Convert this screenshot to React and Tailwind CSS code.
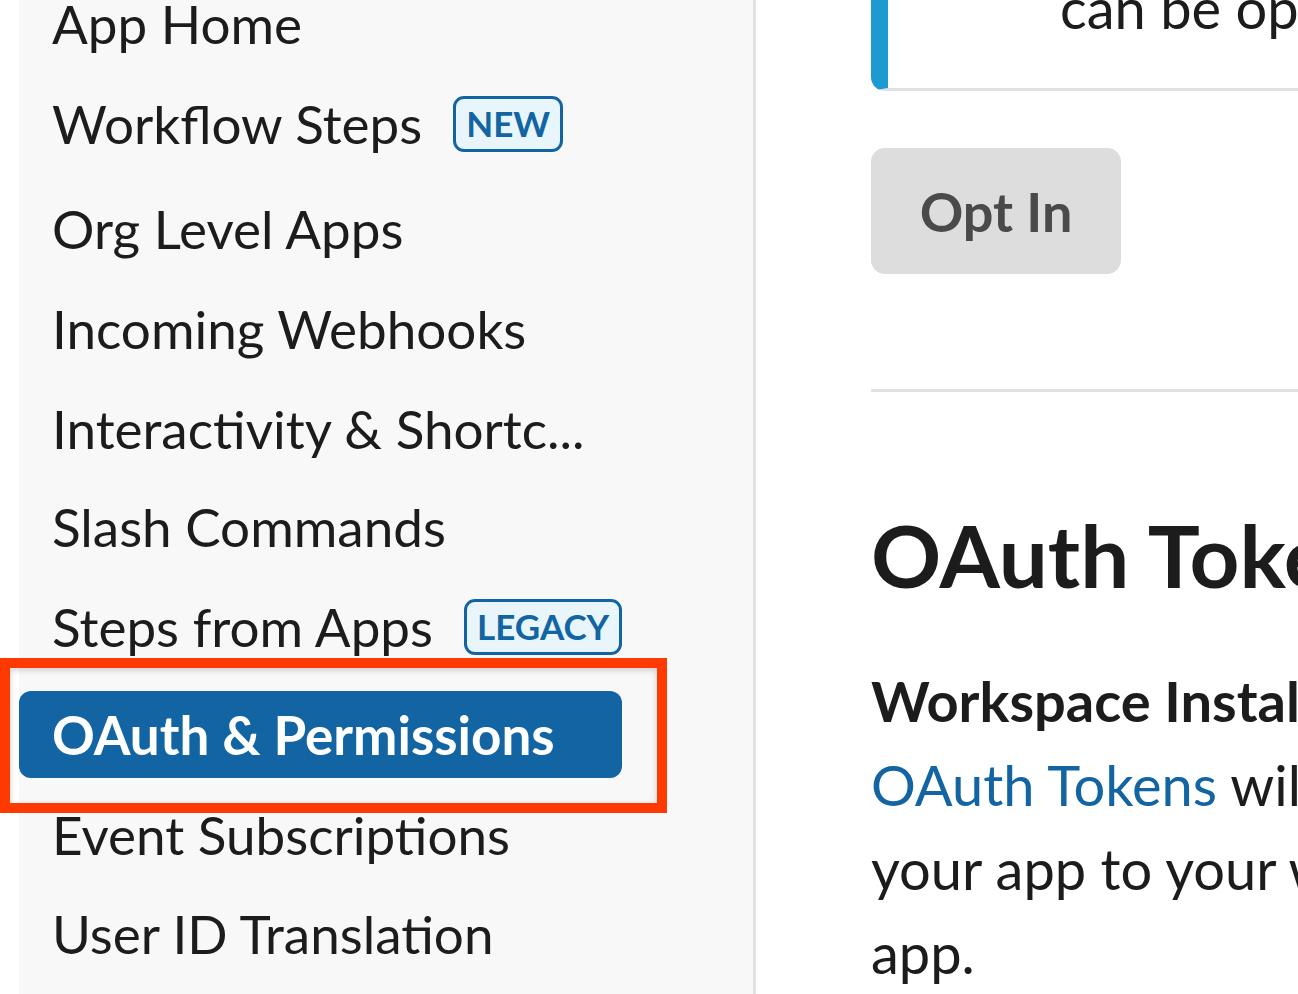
import React from "react";

const navItems = [
  { label: "App Home", gap: "mb-[13px]" },
  { label: "Workflow Steps", badge: "NEW", gap: "mb-[18px]" },
  { label: "Org Level Apps", gap: "mb-[13px]" },
  { label: "Incoming Webhooks", gap: "mb-[13px]" },
  { label: "Interactivity & Shortc...", gap: "mb-[11px]" },
  { label: "Slash Commands", gap: "mb-[13px]" },
  { label: "Steps from Apps", badge: "LEGACY", gap: "mb-[21px]" },
  { label: "OAuth & Permissions", active: true, gap: "mb-[13px]" },
  { label: "Event Subscriptions", gap: "mb-[12px]" },
  { label: "User ID Translation", gap: "mb-[13px]" },
];

function Badge({ children }) {
  return (
    <span className="ml-[31px] inline-flex h-[56px] items-center rounded-[11px] border-[3px] border-[#1264a3] bg-[#e8f5fa] px-[10px] text-[35px] font-bold leading-none text-[#1264a3]">
      {children}
    </span>
  );
}

export default function App() {
  return (
    <div
      className="relative flex h-[994px] w-[1298px] overflow-hidden bg-white text-[#1d1c1d]"
      style={{ fontFamily: "Lato, 'Noto Sans', sans-serif" }}
    >
      <div className="w-[19px] shrink-0 bg-white" />

      {/* sidebar */}
      <aside className="w-[737px] shrink-0 border-r-[3px] border-[#e1e1e1] bg-[#f8f8f8]">
        <ul className="-mt-[20px] w-[603px]">
          {navItems.map((item) => (
            <li
              key={item.label}
              className={`flex h-[87px] items-center rounded-[12px] pl-[33px] text-[53px] whitespace-nowrap ${item.gap} ${
                item.active ? "bg-[#1264a3] font-bold text-white" : ""
              }`}
            >
              {item.label}
              {item.badge && <Badge>{item.badge}</Badge>}
            </li>
          ))}
        </ul>
      </aside>

      {/* main content */}
      <main className="min-w-0 flex-1 pl-[115px]">
        <div className="-mt-[40px] flex h-[131px] items-end rounded-bl-[14px] border-b-[3px] border-l-[17px] border-b-[#e1e1e1] border-l-[#1d9bd1] pb-[52px] pl-[172px]">
          <span className="whitespace-nowrap text-[56px] leading-none">can be opted in</span>
        </div>

        <button className="mt-[57px] h-[126px] w-[250px] rounded-[14px] bg-[#dddddd] text-[54px] font-bold text-[#4a4a4a]">
          Opt In
        </button>

        <div className="mt-[115px] h-[3px] bg-[#e1e1e1]" />

        <h1 className="mt-[119px] whitespace-nowrap text-[87px] font-bold leading-none">
          OAuth Tokens for Your Workspace
        </h1>

        <h3 className="mt-[61px] whitespace-nowrap text-[56px] font-bold leading-[84px]">
          Workspace Installation
        </h3>
        <p className="whitespace-nowrap text-[56px] leading-[84px]">
          <a className="text-[#1264a3]">OAuth Tokens</a> will be automatically generated when you install
          <br />
          your app to your workspace. You’ll use these tokens to authenticate your
          <br />
          app.
        </p>
      </main>

      {/* annotation box */}
      <div className="pointer-events-none absolute left-0 top-[658px] h-[155px] w-[667px] border-[10px] border-[#ff3a00] shadow-[inset_0_2px_6px_rgba(0,0,0,0.18)]" />
    </div>
  );
}
